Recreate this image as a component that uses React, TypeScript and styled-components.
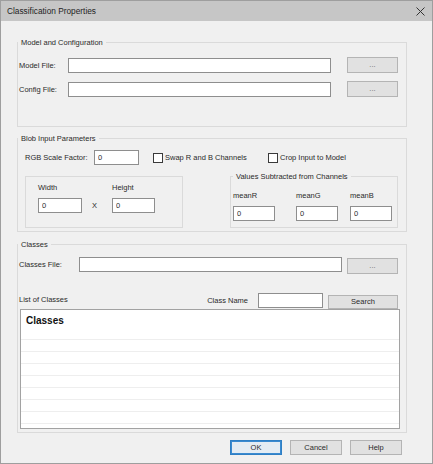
import styled, { createGlobalStyle } from 'styled-components'

const GlobalStyle = createGlobalStyle`
  html, body {
    margin: 0;
    padding: 0;
    background: #ffffff;
  }
  body {
    font-family: "Liberation Sans", Arial, sans-serif;
    font-size: 7.5px;
    color: #2a2a2a;
  }
  * {
    box-sizing: border-box;
  }
`

const Window = styled.div`
  width: 433px;
  height: 464px;
  border: 1px solid #9e9e9e;
  background-color: #f0f0f0;
  display: flex;
  flex-direction: column;
`

const TitleBar = styled.div`
  height: 20px;
  flex: none;
  background-color: #c6c6c6;
  display: flex;
  align-items: center;
  justify-content: space-between;
  padding: 0 7px 0 6px;
`

const Title = styled.span`
  font-size: 8.3px;
  color: #1e1e1e;
`

const CloseButton = styled.span`
  display: flex;
  align-items: center;
  justify-content: center;
  width: 10px;
  height: 10px;
`

const Body = styled.div`
  flex: 1;
  display: flex;
  flex-direction: column;
  padding: 17px 0 0 16px;
`

const Group = styled.fieldset<{ $top?: number; $width: number }>`
  margin: ${(p) => p.$top ?? 0}px 0 0 0;
  padding: 0;
  min-width: 0;
  width: ${(p) => p.$width}px;
  border: 1px solid #dadada;
  flex: none;
`

const Legend = styled.legend<{ $inset?: number }>`
  padding: 0 3px;
  margin-left: ${(p) => p.$inset ?? 0}px;
  font-size: 7.5px;
  line-height: 9px;
  color: #2a2a2a;
`

const GroupContent = styled.div<{ $pad: string }>`
  padding: ${(p) => p.$pad};
  display: flex;
  flex-direction: column;
`

const Row = styled.div<{ $top?: number; $align?: string }>`
  display: flex;
  align-items: ${(p) => p.$align ?? 'flex-start'};
  margin-top: ${(p) => p.$top ?? 0}px;
`

const Label = styled.span<{ $w?: number; $mt?: number; $mb?: number }>`
  flex: none;
  width: ${(p) => (p.$w ? `${p.$w}px` : 'auto')};
  margin-top: ${(p) => p.$mt ?? 0}px;
  margin-bottom: ${(p) => p.$mb ?? 0}px;
  line-height: 9px;
  white-space: nowrap;
`

const TextBox = styled.input<{ $w: number; $ml?: number; $mb?: number }>`
  flex: none;
  width: ${(p) => p.$w}px;
  height: 15px;
  margin: 0 0 ${(p) => p.$mb ?? 0}px ${(p) => p.$ml ?? 0}px;
  padding: 0 3px;
  border: 1px solid #8e8e8e;
  background: #ffffff;
  font-family: "Liberation Sans", Arial, sans-serif;
  font-size: 7.5px;
  color: #2a2a2a;
  outline: none;
`

const Button = styled.button<{ $w: number; $h?: number; $ml?: number; $mt?: number; $default?: boolean; $muted?: boolean }>`
  flex: none;
  width: ${(p) => p.$w}px;
  height: ${(p) => p.$h ?? 16}px;
  margin: ${(p) => p.$mt ?? 0}px 0 0 ${(p) => p.$ml ?? 0}px;
  padding: 0;
  border: 1px solid ${(p) => (p.$default ? '#2f7fc4' : '#b4b4b4')};
  box-shadow: ${(p) => (p.$default ? 'inset 0 0 0 1px #3a8ad0' : 'none')};
  background-color: ${(p) => (p.$default ? '#e4ecf3' : '#e1e1e1')};
  font-family: "Liberation Sans", Arial, sans-serif;
  font-size: 7.5px;
  line-height: 1;
  color: ${(p) => (p.$muted ? '#6a6a6a' : '#2a2a2a')};
`

const CheckItem = styled.label<{ $w?: number; $ml?: number }>`
  display: flex;
  align-items: center;
  gap: 2px;
  width: ${(p) => (p.$w ? `${p.$w}px` : 'auto')};
  margin-left: ${(p) => p.$ml ?? 0}px;
  line-height: 9px;
  white-space: nowrap;
`

const CheckBox = styled.span`
  width: 10px;
  height: 10px;
  flex: none;
  border: 1px solid #3a3a3a;
  background: #ffffff;
`

const Column = styled.div`
  display: flex;
  flex-direction: column;
  align-items: flex-start;
`

const XSign = styled.span`
  width: 30px;
  padding-left: 10px;
  height: 15px;
  line-height: 15px;
`

const MeansGrid = styled.div`
  display: grid;
  grid-template-columns: 63px 54px 42px;
`

const ListBox = styled.div`
  width: 380px;
  height: 120px;
  margin-left: 1px;
  border: 1px solid #a2a2a2;
  background: #ffffff;
  overflow: hidden;
`

const ListHeader = styled.div`
  height: 30px;
  padding: 5px 0 0 5px;
  border-bottom: 1px solid #eeeeee;
  font-size: 10px;
  font-weight: bold;
  color: #111111;
  font-family: "Liberation Sans", Arial, sans-serif;
`

const ListRow = styled.div`
  height: 12px;
  border-bottom: 1px solid #eeeeee;
`

const Footer = styled.div`
  width: 390px;
  margin-top: 7px;
  padding-right: 5px;
  display: flex;
  justify-content: flex-end;
  gap: 8px;
`

const Spacer = styled.div`
  flex: 1;
`

const rows = [0, 1, 2, 3, 4, 5, 6, 7]

export default function App() {
  return (
    <>
      <GlobalStyle />
      <Window>
        <TitleBar>
          <Title>Classification Properties</Title>
          <CloseButton>
            <svg width="9" height="9" viewBox="0 0 9 9">
              <path d="M0.5 0.5 L8.5 8.5 M8.5 0.5 L0.5 8.5" stroke="#333" strokeWidth="1" fill="none" />
            </svg>
          </CloseButton>
        </TitleBar>
        <Body>
          <Group $width={390}>
            <Legend>Model and Configuration</Legend>
            <GroupContent $pad="10px 8px 29px 1px">
              <Row $align="center">
                <Label $w={49}>Model File:</Label>
                <TextBox $w={263} readOnly />
                <Button $w={51} $ml={16} $muted>...</Button>
              </Row>
              <Row $align="center" $top={8}>
                <Label $w={49}>Config File:</Label>
                <TextBox $w={263} readOnly />
                <Button $w={51} $ml={16} $muted>...</Button>
              </Row>
            </GroupContent>
          </Group>

          <Group $width={390} $top={7}>
            <Legend>Blob Input Parameters</Legend>
            <GroupContent $pad="7px 8px 3px 7px">
              <Row $align="center">
                <Label $w={69}>RGB Scale Factor:</Label>
                <TextBox $w={45} defaultValue="0" />
                <CheckItem $w={115} $ml={14}>
                  <CheckBox />
                  Swap R and B Channels
                </CheckItem>
                <CheckItem>
                  <CheckBox />
                  Crop Input to Model
                </CheckItem>
              </Row>
              <Row $align="flex-end" $top={7}>
                <Group $width={158}>
                  <GroupContent $pad="6px 0 14px 12px">
                    <Row $align="flex-end">
                      <Column>
                        <Label $mb={6}>Width</Label>
                        <TextBox $w={44} defaultValue="0" />
                      </Column>
                      <XSign>X</XSign>
                      <Column>
                        <Label $mb={6}>Height</Label>
                        <TextBox $w={43} defaultValue="0" />
                      </Column>
                    </Row>
                  </GroupContent>
                </Group>
                <Spacer />
                <Group $width={168}>
                  <Legend $inset={2}>Values Subtracted from Channels</Legend>
                  <GroupContent $pad="10px 0 6px 2px">
                    <MeansGrid>
                      <Column>
                        <Label $mb={6}>meanR</Label>
                        <TextBox $w={42} defaultValue="0" />
                      </Column>
                      <Column>
                        <Label $mb={6}>meanG</Label>
                        <TextBox $w={42} defaultValue="0" />
                      </Column>
                      <Column>
                        <Label $mb={6}>meanB</Label>
                        <TextBox $w={42} defaultValue="0" />
                      </Column>
                    </MeansGrid>
                  </GroupContent>
                </Group>
              </Row>
            </GroupContent>
          </Group>

          <Group $width={390} $top={8}>
            <Legend>Classes</Legend>
            <GroupContent $pad="8px 8px 3px 1px">
              <Row>
                <Label $w={60} $mt={3}>Classes File:</Label>
                <TextBox $w={263} readOnly />
                <Button $w={51} $ml={5} $mt={1} $muted>...</Button>
              </Row>
              <Row $align="flex-end" $top={19}>
                <Label $mb={5}>List of Classes</Label>
                <Spacer />
                <Label $mb={4}>Class Name</Label>
                <TextBox $w={65} $ml={10} $mb={1} readOnly />
                <Button $w={70} $h={14} $ml={5}>Search</Button>
              </Row>
              <ListBox>
                <ListHeader>Classes</ListHeader>
                {rows.map((r) => (
                  <ListRow key={r} />
                ))}
              </ListBox>
            </GroupContent>
          </Group>

          <Footer>
            <Button $w={52} $h={15} $default>OK</Button>
            <Button $w={52} $h={15}>Cancel</Button>
            <Button $w={52} $h={15}>Help</Button>
          </Footer>
        </Body>
      </Window>
    </>
  )
}
